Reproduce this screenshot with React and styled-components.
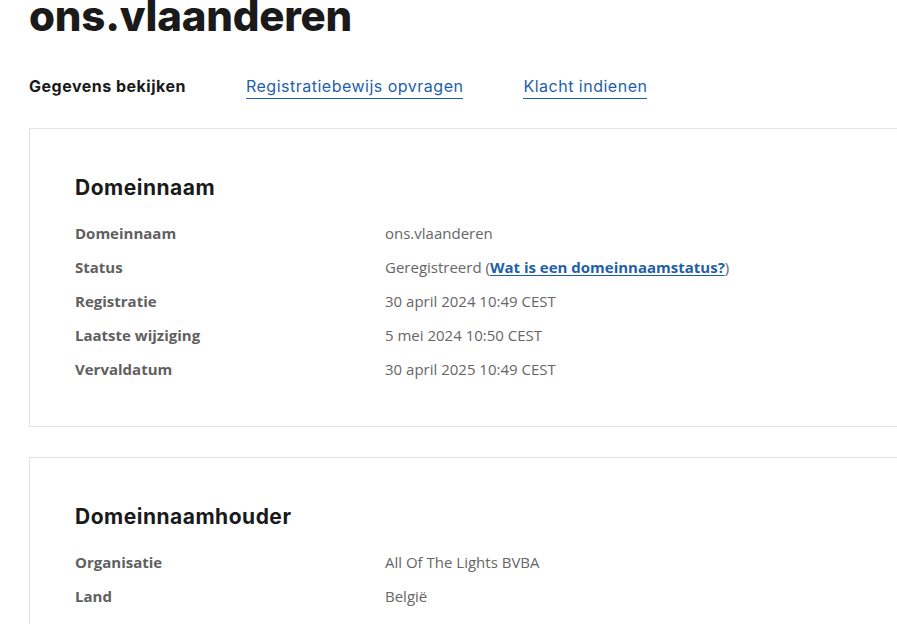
import React from "react";
import styled, { createGlobalStyle } from "styled-components";

const Global = createGlobalStyle`
  html, body { margin: 0; padding: 0; background: #ffffff; overflow: hidden; }
  body { font-family: "Open Sans", "Noto Sans", sans-serif; }
`;

const Page = styled.div`
  width: 1100px;
  padding: 0 0 0 29px;
  display: flex;
  flex-direction: column;
`;

const Title = styled.h1`
  margin: -9px 0 0 0;
  font-family: Inter, sans-serif;
  font-weight: 800;
  font-size: 42px;
  line-height: 50px;
  color: #1a1a1a;
  letter-spacing: -0.2px;
`;

const Tabs = styled.nav`
  display: flex;
  align-items: center;
  gap: 60px;
  margin-top: 31px;
  height: 28px;
`;

const Tab = styled.a`
  font-family: Inter, sans-serif;
  font-size: 16px;
  letter-spacing: 0.5px;
  line-height: 24px;
  color: ${(p) => (p.$active ? "#1a1a1a" : "#1f5fa8")};
  font-weight: ${(p) => (p.$active ? 700 : 400)};
  text-decoration: none;
  border-bottom: ${(p) => (p.$active ? "1px solid transparent" : "1px solid #1f5fa8")};
`;

const Cards = styled.div`
  display: flex;
  flex-direction: column;
  gap: 30px;
  margin-top: 28px;
`;

const Card = styled.section`
  border: 1px solid #e3e3e3;
  background: #fff;
  padding: 46px 46px 45px 45px;
`;

const CardTitle = styled.h2`
  margin: 0 0 20px 0;
  font-family: Inter, sans-serif;
  font-weight: 700;
  font-size: 21px;
  letter-spacing: 0.5px;
  line-height: 26px;
  color: #1a1a1a;
`;

const Rows = styled.dl`
  margin: 0;
  display: grid;
  grid-template-columns: 310px 1fr;
  row-gap: 10px;
`;

const Label = styled.dt`
  font-size: 15px;
  line-height: 24px;
  font-weight: 700;
  color: #606060;
`;

const Value = styled.dd`
  margin: 0;
  font-size: 15px;
  line-height: 24px;
  color: #666666;
`;

const InlineLink = styled.a`
  color: #1f5fa8;
  font-weight: 700;
  text-decoration: underline;
  text-underline-offset: 2px;
`;

const domain = [
  ["Domeinnaam", "ons.vlaanderen"],
  ["Status", "status"],
  ["Registratie", "30 april 2024 10:49 CEST"],
  ["Laatste wijziging", "5 mei 2024 10:50 CEST"],
  ["Vervaldatum", "30 april 2025 10:49 CEST"],
];

const holder = [
  ["Organisatie", "All Of The Lights BVBA"],
  ["Land", "België"],
];

function Section({ title, rows }) {
  return (
    <Card>
      <CardTitle>{title}</CardTitle>
      <Rows>
        {rows.map(([l, v]) => (
          <React.Fragment key={l}>
            <Label>{l}</Label>
            <Value>
              {v === "status" ? (
                <>
                  Geregistreerd (<InlineLink href="#">Wat is een domeinnaamstatus?</InlineLink>)
                </>
              ) : (
                v
              )}
            </Value>
          </React.Fragment>
        ))}
      </Rows>
    </Card>
  );
}

export default function App() {
  return (
    <>
      <Global />
      <Page>
        <Title>ons.vlaanderen</Title>
        <Tabs>
          <Tab $active>Gegevens bekijken</Tab>
          <Tab href="#">Registratiebewijs opvragen</Tab>
          <Tab href="#">Klacht indienen</Tab>
        </Tabs>
        <Cards>
          <Section title="Domeinnaam" rows={domain} />
          <Section title="Domeinnaamhouder" rows={holder} />
        </Cards>
      </Page>
    </>
  );
}
